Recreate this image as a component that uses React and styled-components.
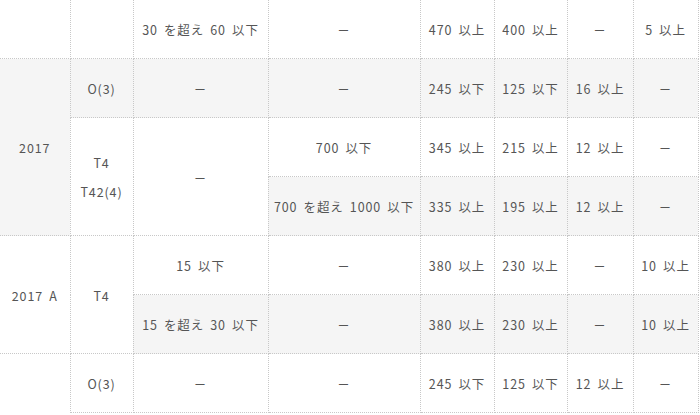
import React from 'react'
import styled, { createGlobalStyle } from 'styled-components'

const Global = createGlobalStyle`
  html, body {
    margin: 0;
    background: #fff;
    overflow: hidden;
  }
`

const Table = styled.table`
  width: 698px;
  table-layout: fixed;
  border-collapse: collapse;
  border-top: hidden;
  border-left: hidden;
  font-family: "Noto Sans CJK JP", "Noto Sans", sans-serif;
  font-size: 12.5px;
  letter-spacing: .07em;
  word-spacing: 2.5px;
  color: #555;
`

const Row = styled.tr`
  &:nth-child(even) {
    background-color: #f5f5f5;
  }
`

const Cell = styled.td`
  padding: 15px 2px 14px;
  line-height: 29px;
  text-align: center;
  vertical-align: middle;
  white-space: nowrap;
  border: 1px dotted #c8c8c8;
  ${p => p.$open && 'border-bottom: hidden;'}
`

const widths = [70, 63, 135, 152, 74, 73, 66, 65]
const D = '－'

const App = () => (
  <>
    <Global />
    <Table>
      <colgroup>
        {widths.map((w, i) => <col key={i} style={{ width: w }} />)}
      </colgroup>
      <tbody>
        <Row>
          <Cell />
          <Cell />
          <Cell>30 を超え 60 以下</Cell>
          <Cell>{D}</Cell>
          <Cell>470 以上</Cell>
          <Cell>400 以上</Cell>
          <Cell>{D}</Cell>
          <Cell>5 以上</Cell>
        </Row>
        <Row>
          <Cell rowSpan={3}>2017</Cell>
          <Cell>O(3)</Cell>
          <Cell>{D}</Cell>
          <Cell>{D}</Cell>
          <Cell>245 以下</Cell>
          <Cell>125 以下</Cell>
          <Cell>16 以上</Cell>
          <Cell>{D}</Cell>
        </Row>
        <Row>
          <Cell rowSpan={2}>T4<br />T42(4)</Cell>
          <Cell rowSpan={2}>{D}</Cell>
          <Cell>700 以下</Cell>
          <Cell>345 以上</Cell>
          <Cell>215 以上</Cell>
          <Cell>12 以上</Cell>
          <Cell>{D}</Cell>
        </Row>
        <Row>
          <Cell>700 を超え 1000 以下</Cell>
          <Cell>335 以上</Cell>
          <Cell>195 以上</Cell>
          <Cell>12 以上</Cell>
          <Cell>{D}</Cell>
        </Row>
        <Row>
          <Cell rowSpan={2}>2017 A</Cell>
          <Cell rowSpan={2}>T4</Cell>
          <Cell>15 以下</Cell>
          <Cell>{D}</Cell>
          <Cell>380 以上</Cell>
          <Cell>230 以上</Cell>
          <Cell>{D}</Cell>
          <Cell>10 以上</Cell>
        </Row>
        <Row>
          <Cell>15 を超え 30 以下</Cell>
          <Cell>{D}</Cell>
          <Cell>380 以上</Cell>
          <Cell>230 以上</Cell>
          <Cell>{D}</Cell>
          <Cell>10 以上</Cell>
        </Row>
        <Row>
          <Cell $open />
          <Cell>O(3)</Cell>
          <Cell>{D}</Cell>
          <Cell>{D}</Cell>
          <Cell>245 以下</Cell>
          <Cell>125 以下</Cell>
          <Cell>12 以上</Cell>
          <Cell>{D}</Cell>
        </Row>
      </tbody>
    </Table>
  </>
)

export default App
